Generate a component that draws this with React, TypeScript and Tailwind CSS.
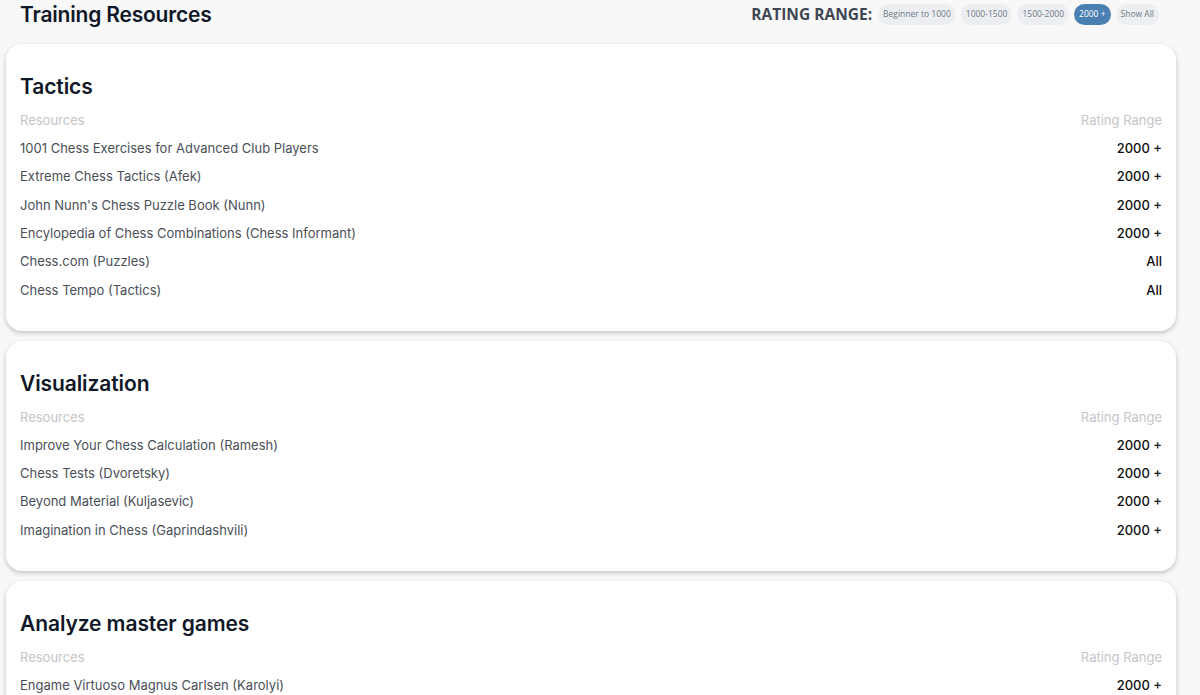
import React from "react";

type Row = { name: string; rating: string };
type Section = { title: string; rows: Row[] };

const sections: Section[] = [
  {
    title: "Tactics",
    rows: [
      { name: "1001 Chess Exercises for Advanced Club Players", rating: "2000 +" },
      { name: "Extreme Chess Tactics (Afek)", rating: "2000 +" },
      { name: "John Nunn's Chess Puzzle Book (Nunn)", rating: "2000 +" },
      { name: "Encylopedia of Chess Combinations (Chess Informant)", rating: "2000 +" },
      { name: "Chess.com (Puzzles)", rating: "All" },
      { name: "Chess Tempo (Tactics)", rating: "All" },
    ],
  },
  {
    title: "Visualization",
    rows: [
      { name: "Improve Your Chess Calculation (Ramesh)", rating: "2000 +" },
      { name: "Chess Tests (Dvoretsky)", rating: "2000 +" },
      { name: "Beyond Material (Kuljasevic)", rating: "2000 +" },
      { name: "Imagination in Chess (Gaprindashvili)", rating: "2000 +" },
    ],
  },
  {
    title: "Analyze master games",
    rows: [
      { name: "Engame Virtuoso Magnus Carlsen (Karolyi)", rating: "2000 +" },
      { name: "My System (Nimzowitsch)", rating: "2000 +" },
    ],
  },
];

const pills = ["Beginner to 1000", "1000-1500", "1500-2000", "2000 +", "Show All"];

export default function App() {
  return (
    <div
      className="w-[1200px] h-[695px] overflow-hidden bg-[#f8f8f9]"
      style={{ fontFamily: "Inter, 'Noto Sans', sans-serif" }}
    >
      <div className="flex items-center justify-between pl-[20px] pr-[41px] h-[29px]">
        <h1 className="text-[21px] font-semibold text-[#101828] tracking-[-0.2px] leading-none">
          Training Resources
        </h1>
        <div className="flex items-center gap-[5px]" style={{ fontFamily: "'Open Sans', sans-serif" }}>
          <span className="text-[15.5px] font-bold text-[#3f4652] mr-[1px]">RATING RANGE:</span>
          {pills.map((p) => (
            <span
              key={p}
              className={
                p === "2000 +"
                  ? "h-[21px] px-[5px] rounded-full bg-[#4a7fb1] text-white text-[8.5px] flex items-center"
                  : "h-[21px] px-[5px] rounded-full bg-[#eceef1] text-[#6d7a88] text-[8.5px] flex items-center"
              }
            >
              {p}
            </span>
          ))}
        </div>
      </div>
      <div className="flex flex-col gap-[10px] pl-[6px] pr-[24px] pt-[15px]">
        {sections.map((s) => (
          <div
            key={s.title}
            className="bg-white rounded-[16px] px-[14px] pt-[29px] pb-[26px] shadow-[0_2px_5px_rgba(0,0,0,0.22)]"
          >
            <h2 className="text-[21px] font-semibold text-[#101828] leading-[28px] tracking-[-0.1px]">
              {s.title}
            </h2>
            <div className="flex justify-between text-[13px] text-[#c3c5c9] leading-[20px] mt-[9px] h-[20px]">
              <span>Resources</span>
              <span>Rating Range</span>
            </div>
            <div className="flex flex-col mt-[4.4px]">
              {s.rows.map((r) => (
                <div key={r.name} className="flex justify-between items-center h-[28.4px] text-[13px]">
                  <span className="text-[#4a4f57]">{r.name}</span>
                  <span className="text-[#111] font-medium">{r.rating}</span>
                </div>
              ))}
            </div>
          </div>
        ))}
      </div>
    </div>
  );
}
